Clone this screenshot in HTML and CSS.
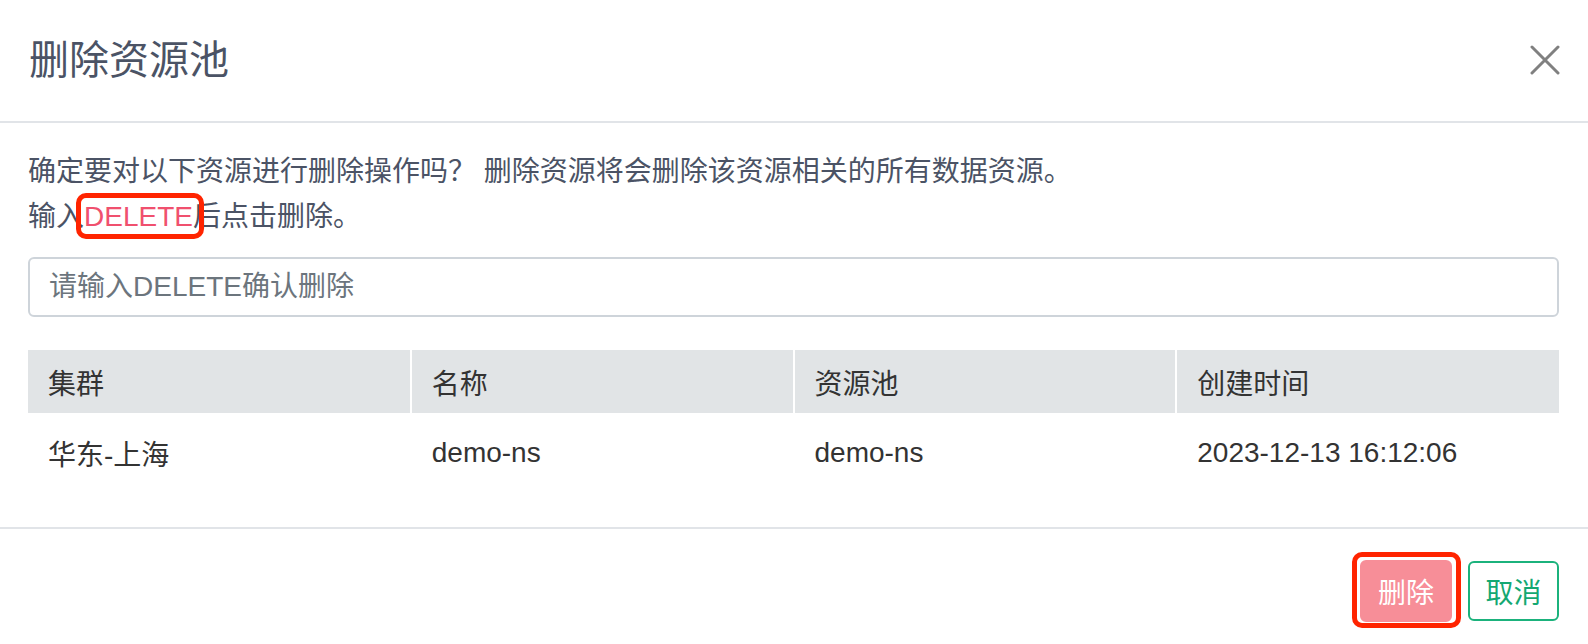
FILE: index.html
```html
<!DOCTYPE html>
<html lang="zh-CN">
<head>
  <meta charset="UTF-8">
  <title>删除资源池</title>
  <link rel="stylesheet" href="styles.css">
</head>
<body>
  <div class="modal">
    <div class="modal-header">
      <h1 class="modal-title">删除资源池</h1>
      <button class="close-btn" aria-label="关闭">
        <svg width="30" height="30" viewBox="0 0 30 30">
          <path d="M2 2 L28 28 M28 2 L2 28" stroke="#808080" stroke-width="3" stroke-linecap="round" fill="none"/>
        </svg>
      </button>
    </div>

    <div class="modal-body">
      <p class="notice">确定要对以下资源进行删除操作吗？ 删除资源将会删除该资源相关的所有数据资源。<br>输入<span class="keyword mark">DELETE</span>后点击删除。</p>

      <input class="confirm-input" type="text" placeholder="请输入DELETE确认删除">

      <table class="res-table">
        <thead>
          <tr>
            <th>集群</th>
            <th>名称</th>
            <th>资源池</th>
            <th>创建时间</th>
          </tr>
        </thead>
        <tbody>
          <tr>
            <td>华东-上海</td>
            <td>demo-ns</td>
            <td>demo-ns</td>
            <td>2023-12-13 16:12:06</td>
          </tr>
        </tbody>
      </table>
    </div>

    <div class="modal-footer">
      <button class="btn btn-danger mark" disabled>删除</button>
      <button class="btn btn-cancel">取消</button>
    </div>
  </div>
</body>
</html>
```

FILE: styles.css
```css
body {
  margin: 0;
  padding: 0;
  background: #fff;
  font-family: "Liberation Sans", "Noto Sans CJK SC", sans-serif;
  color: #4b5365;
}
.modal {
  width: 100%;
}
.modal-header {
  height: 121px;
  padding: 0 28px 0 29px;
  display: flex;
  align-items: center;
  justify-content: space-between;
  border-bottom: 2px solid #e1e4e8;
}
.modal-title {
  margin: 0;
  font-size: 40px;
  font-weight: normal;
  color: #4b5365;
  line-height: 1;
  padding-bottom: 2px;
}
.close-btn {
  background: none;
  border: none;
  padding: 0;
  cursor: pointer;
  display: flex;
  margin-bottom: 2px;
}
.modal-body {
  padding: 26px 29px 34px 28px;
}
.notice {
  margin: 0;
  font-size: 28px;
  line-height: 45px;
}
.keyword {
  color: #f0506e;
}
.mark {
  position: relative;
}
.mark::after {
  content: "";
  position: absolute;
  top: -8px;
  bottom: -7px;
  left: -8px;
  right: -11px;
  border: 5px solid #ff2400;
  border-radius: 10px;
  pointer-events: none;
}
.confirm-input {
  display: block;
  box-sizing: border-box;
  width: 100%;
  height: 60px;
  margin-top: 18px;
  padding: 0 19px;
  border: 2px solid #ced4da;
  border-radius: 6px;
  font-family: inherit;
  font-size: 28px;
  color: #495057;
  outline: none;
}
.confirm-input::placeholder {
  color: #6c757d;
}
.res-table {
  width: 100%;
  margin-top: 33px;
  border-collapse: collapse;
  table-layout: fixed;
  font-size: 28px;
  color: #333;
}
.res-table th {
  background: #e1e4e6;
  font-weight: normal;
  text-align: left;
  padding: 0 20px;
  height: 63px;
}
.res-table th + th {
  border-left: 2px solid #fff;
}
.res-table td {
  padding: 0 20px;
  height: 80px;
}
.res-table td + td {
  border-left: 2px solid transparent;
}
.modal-footer {
  border-top: 2px solid #e1e4e8;
  padding: 32px 29px 20px;
  display: flex;
  justify-content: flex-end;
  gap: 16px;
}
.btn {
  font-family: inherit;
  font-size: 28px;
  height: 60px;
  border-radius: 6px;
  padding: 0;
  white-space: nowrap;
  cursor: pointer;
}
.btn-danger {
  background: #f78e98;
  border: 2px solid #f78e98;
  color: #fff;
  width: 92px;
  height: 62px;
  margin-top: -1px;
}
.btn-danger::after {
  top: -10px;
  bottom: -8px;
  left: -10px;
  right: -11px;
}
.btn-cancel {
  background: #fff;
  border: 2px solid #1bb27c;
  color: #14a872;
  width: 91px;
}
```
